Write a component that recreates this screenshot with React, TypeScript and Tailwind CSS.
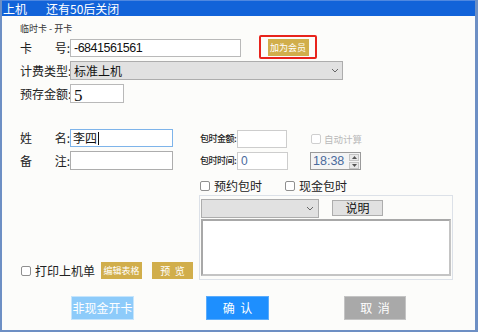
import React from "react";

const cjk = "font-['Noto_Sans_CJK_SC','Liberation_Sans',sans-serif]";

function Label({ a, b }: { a: string; b?: string }) {
    // two-part labels (卡 / 号) are spread across the width
    return (
        <div className="w-[50px] shrink-0 whitespace-nowrap flex justify-between text-[12px] leading-[14px] text-[#222]">
            <span>{a}</span>
            {b && <span>{b}</span>}
        </div>
    );
}

function Check({ disabled }: { disabled?: boolean }) {
    return (
        <span
            className={`block w-[10px] h-[10px] rounded-[2px] border bg-white ${disabled ? "border-[#cfcfcf]" : "border-[#8f8f8f]"}`}
        />
    );
}

function Chevron() {
    return (
        <svg width="8" height="5" viewBox="0 0 8 5" className="text-[#666]">
            <path d="M1 1 L4 4 L7 1" fill="none" stroke="currentColor" strokeWidth="1" />
        </svg>
    );
}

export default function App() {
    return (
        <div className={`w-[478px] h-[332px] flex flex-col bg-[#fcfcfa] border-l-2 border-r-[3px] border-b-2 border-[#6d8fc4] ${cjk}`}>
            {/* title bar */}
            <div className="h-[16px] shrink-0 bg-[#1263d9] border-t border-[#4f88e0] flex items-center text-white text-[12px] leading-[14px] whitespace-nowrap">
                <span className="pl-[1px]">上机</span>
                <span className="ml-[19px]">还有50后关闭</span>
            </div>

            <div className="pl-[18px] flex flex-col">
                <div className="mt-[7px] h-[12px] text-[9px] leading-[12px] text-[#333] whitespace-nowrap">临时卡 - 开卡</div>

                {/* 卡号 */}
                <div className="flex items-start">
                    <div className="mt-[4px] h-[18px] flex items-center">
                        <Label a="卡" b="号:" />
                        <div className="w-[171px] h-[18px] border border-[#b9b9b9] bg-white flex items-center pl-[3px] font-['Liberation_Sans',sans-serif] text-[12.5px] tracking-[-0.5px] text-[#111]">
                            -6841561561
                        </div>
                    </div>
                    <div className="ml-[18px] w-[58px] h-[24px] border-2 border-[#e8231c] rounded-[2px] flex items-center justify-center">
                        <div className="w-[41px] h-[17px] bg-[#d1ae4b] text-white text-[9px] leading-[17px] text-center whitespace-nowrap">加为会员</div>
                    </div>
                </div>

                {/* 计费类型 */}
                <div className="mt-[2px] h-[19px] flex items-center">
                    <Label a="计费类型:" />
                    <div className="w-[273px] h-[19px] border border-[#adadad] bg-[#e1e1e1] flex items-center justify-between pl-[3px] pr-[3px] text-[12px] text-[#111]">
                        <span>标准上机</span>
                        <Chevron />
                    </div>
                </div>

                {/* 预存金额 */}
                <div className="mt-[4px] h-[19px] flex items-center">
                    <Label a="预存金额:" />
                    <div className="w-[54px] h-[19px] border border-[#b9b9b9] bg-white flex items-center pl-[3px] font-['Liberation_Serif',serif] text-[17px] leading-[17px] text-[#111] pt-[3px]">
                        5
                    </div>
                </div>

                <div className="mt-[26px] flex">
                    {/* left column */}
                    <div className="w-[179px] shrink-0 flex flex-col">
                        <div className="h-[18px] flex items-center">
                            <Label a="姓" b="名:" />
                            <div className="w-[103px] h-[18px] border border-[#7eb4ea] bg-white flex items-center pl-[2px] text-[12px] text-[#111]">
                                李四<span className="w-px h-[13px] bg-[#111] ml-px" />
                            </div>
                        </div>
                        <div className="mt-[4px] h-[19px] flex items-center">
                            <Label a="备" b="注:" />
                            <div className="w-[103px] h-[19px] border border-[#adadad] bg-white" />
                        </div>
                        <div className="mt-[92px] h-[17px] flex items-center whitespace-nowrap">
                            <span className="ml-px"><Check /></span>
                            <span className="ml-[4px] text-[12px] text-[#222] leading-[14px]">打印上机单</span>
                            <div className="ml-[6px] w-[41px] h-[17px] bg-[#d1ae4b] text-white text-[9px] leading-[17px] text-center">编辑表格</div>
                            <div className="ml-[10px] w-[41px] h-[17px] bg-[#d1ae4b] text-white text-[10px] leading-[17px] text-center">预 &nbsp;览</div>
                        </div>
                    </div>

                    {/* right column */}
                    <div className="flex flex-col whitespace-nowrap">
                        <div className="mt-px h-[18px] flex items-center">
                            <span className="w-[38px] shrink-0 pl-px text-[9px] tracking-[-0.5px] font-medium leading-[12px] text-[#222]">包时金额:</span>
                            <div className="w-[50px] h-[18px] border border-[#cdcdcd] bg-white" />
                            <span className="ml-[24px]"><Check disabled /></span>
                            <span className="ml-[3px] text-[9.5px] text-[#b9b9b9] leading-[12px]">自动计算</span>
                        </div>
                        <div className="mt-[4px] h-[18px] flex items-center">
                            <span className="w-[38px] shrink-0 pl-px text-[9px] tracking-[-0.5px] font-medium leading-[12px] text-[#222]">包时时间:</span>
                            <div className="w-[51px] h-[18px] border border-[#cdcdcd] bg-white flex items-center pl-[3px] font-['Liberation_Sans',sans-serif] text-[12px] text-[#4a6a9c]">0</div>
                            <div className="ml-[22px] w-[51px] h-[18px] border border-[#9a9a9a] bg-[#f4f4f4] flex items-center justify-between pl-[2px] pr-px font-['Liberation_Sans',sans-serif] text-[12.5px] text-[#4a6a9c]">
                                <span>18:38</span>
                                <div className="flex flex-col gap-px">
                                    <div className="w-[10px] h-[7px] bg-[#e8e8e8] border border-[#c4c4c4] flex items-center justify-center">
                                        <svg width="5" height="3" viewBox="0 0 5 3"><path d="M0 3 L2.5 0 L5 3 Z" fill="#555" /></svg>
                                    </div>
                                    <div className="w-[10px] h-[7px] bg-[#e8e8e8] border border-[#c4c4c4] flex items-center justify-center">
                                        <svg width="5" height="3" viewBox="0 0 5 3"><path d="M0 0 L2.5 3 L5 0 Z" fill="#555" /></svg>
                                    </div>
                                </div>
                            </div>
                        </div>
                        <div className="mt-[10px] h-[12px] flex items-center text-[12px] leading-[14px] text-[#222]">
                            <span className="ml-px"><Check /></span>
                            <span className="ml-[4px]">预约包时</span>
                            <span className="ml-[23px]"><Check /></span>
                            <span className="ml-[4px]">现金包时</span>
                        </div>
                        <div className="mt-[3px] w-[254px] h-[85px] border border-[#dce1e8] p-px flex flex-col">
                            <div className="mt-[2px] flex items-start">
                                <div className="w-[118px] h-[19px] border border-[#adadad] bg-[#e1e1e1] flex items-center justify-end pr-[4px]">
                                    <Chevron />
                                </div>
                                <div className="ml-[13px] mt-px w-[51px] h-[16px] border border-[#adadad] bg-[#e1e1e1] text-[12px] leading-[14px] text-[#111] text-center">说明</div>
                            </div>
                            <div className="mt-px flex-1 mb-[2px] border-2 border-[#c4c4c4] border-t-[#a8a8a8] border-l-[#a8a8a8] bg-white" />
                        </div>
                    </div>
                </div>

                {/* bottom buttons */}
                <div className="mt-[16px] flex text-white text-[12px] leading-[22px] whitespace-nowrap">
                    <div className="ml-[51px] w-[63px] h-[24px] bg-[#8dcbfa] border border-[#c6e5fc] text-center">非现金开卡</div>
                    <div className="ml-[72px] w-[63px] h-[24px] bg-[#1e8ffe] border border-[#5aacfc] text-center">确 &nbsp;认</div>
                    <div className="ml-[75px] w-[62px] h-[24px] bg-[#a9a9a9] border border-[#c4c4c4] text-center">取 &nbsp;消</div>
                </div>
            </div>
        </div>
    );
}
